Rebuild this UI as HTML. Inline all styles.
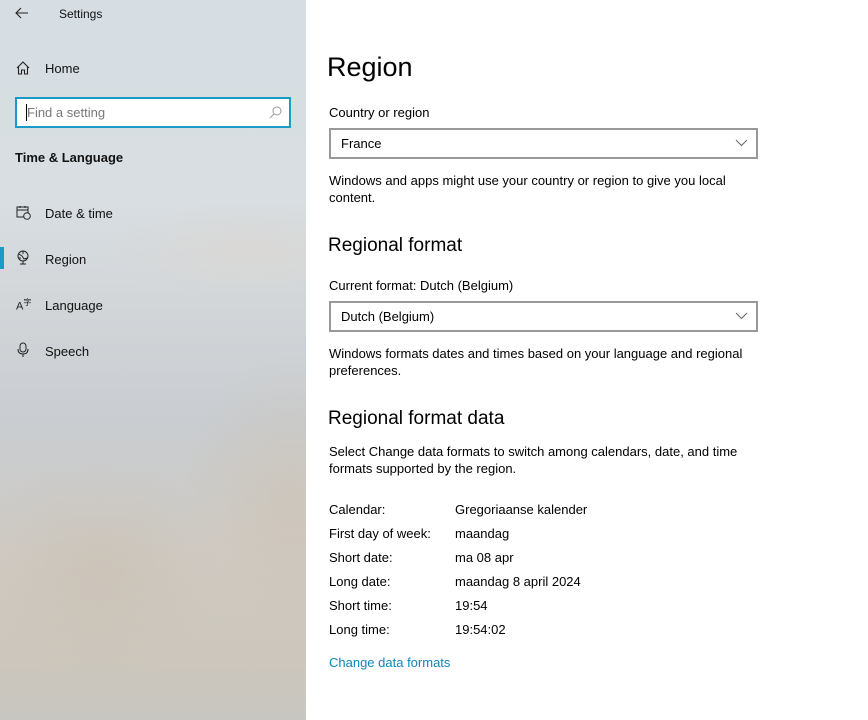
<!DOCTYPE html>
<html><head><meta charset="utf-8"><style>
*{margin:0;padding:0;box-sizing:border-box}
body{width:868px;height:720px;overflow:hidden;font-family:"Liberation Sans",sans-serif;font-size:13px;color:#000;background:#fff;position:relative}
#side{position:absolute;left:0;top:0;width:306px;height:720px;
background:
radial-gradient(ellipse 110px 150px at 290px 500px,rgba(205,192,175,.5),transparent),
radial-gradient(ellipse 130px 110px at 100px 570px,rgba(200,190,175,.5),transparent),
radial-gradient(ellipse 150px 50px at 250px 250px,rgba(222,214,206,.5),transparent),
linear-gradient(#d6dde3 0,#d8dee2 200px,#d2d6d9 300px,#c9cdd1 420px,#cfcac3 560px,#ccc6bc 660px,#c8c6c0 720px)}
.a{position:absolute;white-space:nowrap}
.nav{position:absolute;left:45px;font-size:13px;color:#111}
.ic{position:absolute;left:16px}
#search{position:absolute;left:15px;top:97px;width:276px;height:31px;border:2px solid #1a9ac7;background:#fff}
.dd{position:absolute;left:329px;width:429px;height:31px;border:2px solid #999;background:#fff}
.dd span{position:absolute;left:10px;top:6px}
.dd svg{position:absolute;right:8px;top:9px}
.r{position:absolute;left:329px}
.v{position:absolute;left:455px}
</style></head><body>
<div id="side">
<svg class="a" style="left:15px;top:7px" width="14" height="12" viewBox="0 0 14 12"><path d="M6 1L1 6l5 5M1 6h12" fill="none" stroke="#222" stroke-width="1.1"/></svg>
<div class="a" style="left:59px;top:7px;font-size:12px;color:#111">Settings</div>
<svg class="ic" style="top:61px" width="14" height="14" viewBox="0 0 14 14"><path d="M1 7L7 1l6 6M2.5 5.5V13h3V9h3v4h3V5.5" fill="none" stroke="#222" stroke-width="1.1"/></svg>
<div class="nav" style="top:61px">Home</div>
<div id="search"><div class="a" style="left:9px;top:5px;width:1px;height:17px;background:#000"></div><div class="a" style="left:10px;top:6px;color:#777">Find a setting</div>
<svg class="a" style="right:7px;top:7px" width="13" height="13" viewBox="0 0 13 13"><circle cx="8" cy="5" r="4" fill="none" stroke="#999"/><path d="M5 8l-4 4" stroke="#999"/></svg></div>
<div class="a" style="left:15px;top:150px;font-weight:bold;color:#111">Time &amp; Language</div>
<svg class="ic" style="top:205px" width="15" height="15" viewBox="0 0 15 15"><rect x="1" y="2" width="11" height="10" fill="none" stroke="#222"/><path d="M1 5h11M4 1v2M9 1v2" stroke="#222"/><circle cx="11" cy="11" r="3.3" fill="#ddd" stroke="#222"/></svg>
<div class="nav" style="top:206px">Date &amp; time</div>
<div class="a" style="left:0;top:247px;width:4px;height:22px;background:#1a9ac7"></div>
<svg class="ic" style="top:250px" width="15" height="16" viewBox="0 0 15 16"><circle cx="7" cy="6" r="5" fill="none" stroke="#222"/><path d="M3 4l3 2 2 3 3-1M7 1v3M2 8h3" stroke="#222" fill="none"/><path d="M7 11v3M4 14h6" stroke="#222"/></svg>
<div class="nav" style="top:252px">Region</div>
<div class="a" style="left:16px;top:297px;font-size:11px;color:#222">A<sup style="font-size:8px">字</sup></div>
<div class="nav" style="top:298px">Language</div>
<svg class="ic" style="top:342px" width="14" height="16" viewBox="0 0 14 16"><rect x="4" y="1" width="6" height="9" rx="3" fill="none" stroke="#222"/><path d="M2 7q0 5 5 5t5-5M7 12v3" fill="none" stroke="#222"/></svg>
<div class="nav" style="top:344px">Speech</div>
</div>
<div class="a" style="left:327px;top:52px;font-size:27px;color:#000">Region</div>
<div class="r" style="top:105px">Country or region</div>
<div class="dd" style="top:128px"><span>France</span><svg width="13" height="8" viewBox="0 0 13 8"><path d="M1 1l5.5 5.5L12 1" fill="none" stroke="#666"/></svg></div>
<div class="r" style="top:172px;line-height:17px">Windows and apps might use your country or region to give you local<br>content.</div>
<div class="a" style="left:328px;top:235px;font-size:19px">Regional format</div>
<div class="r" style="top:278px">Current format: Dutch (Belgium)</div>
<div class="dd" style="top:301px"><span>Dutch (Belgium)</span><svg width="13" height="8" viewBox="0 0 13 8"><path d="M1 1l5.5 5.5L12 1" fill="none" stroke="#666"/></svg></div>
<div class="r" style="top:345px;line-height:17px">Windows formats dates and times based on your language and regional<br>preferences.</div>
<div class="a" style="left:328px;top:408px;font-size:19px">Regional format data</div>
<div class="r" style="top:443px;line-height:17px">Select Change data formats to switch among calendars, date, and time<br>formats supported by the region.</div>
<div class="r" style="top:502px">Calendar:</div><div class="v" style="top:502px">Gregoriaanse kalender</div>
<div class="r" style="top:526px">First day of week:</div><div class="v" style="top:526px">maandag</div>
<div class="r" style="top:550px">Short date:</div><div class="v" style="top:550px">ma 08 apr</div>
<div class="r" style="top:574px">Long date:</div><div class="v" style="top:574px">maandag 8 april 2024</div>
<div class="r" style="top:598px">Short time:</div><div class="v" style="top:598px">19:54</div>
<div class="r" style="top:622px">Long time:</div><div class="v" style="top:622px">19:54:02</div>
<div class="r" style="top:655px;color:#0f86b8">Change data formats</div>
</body></html>
